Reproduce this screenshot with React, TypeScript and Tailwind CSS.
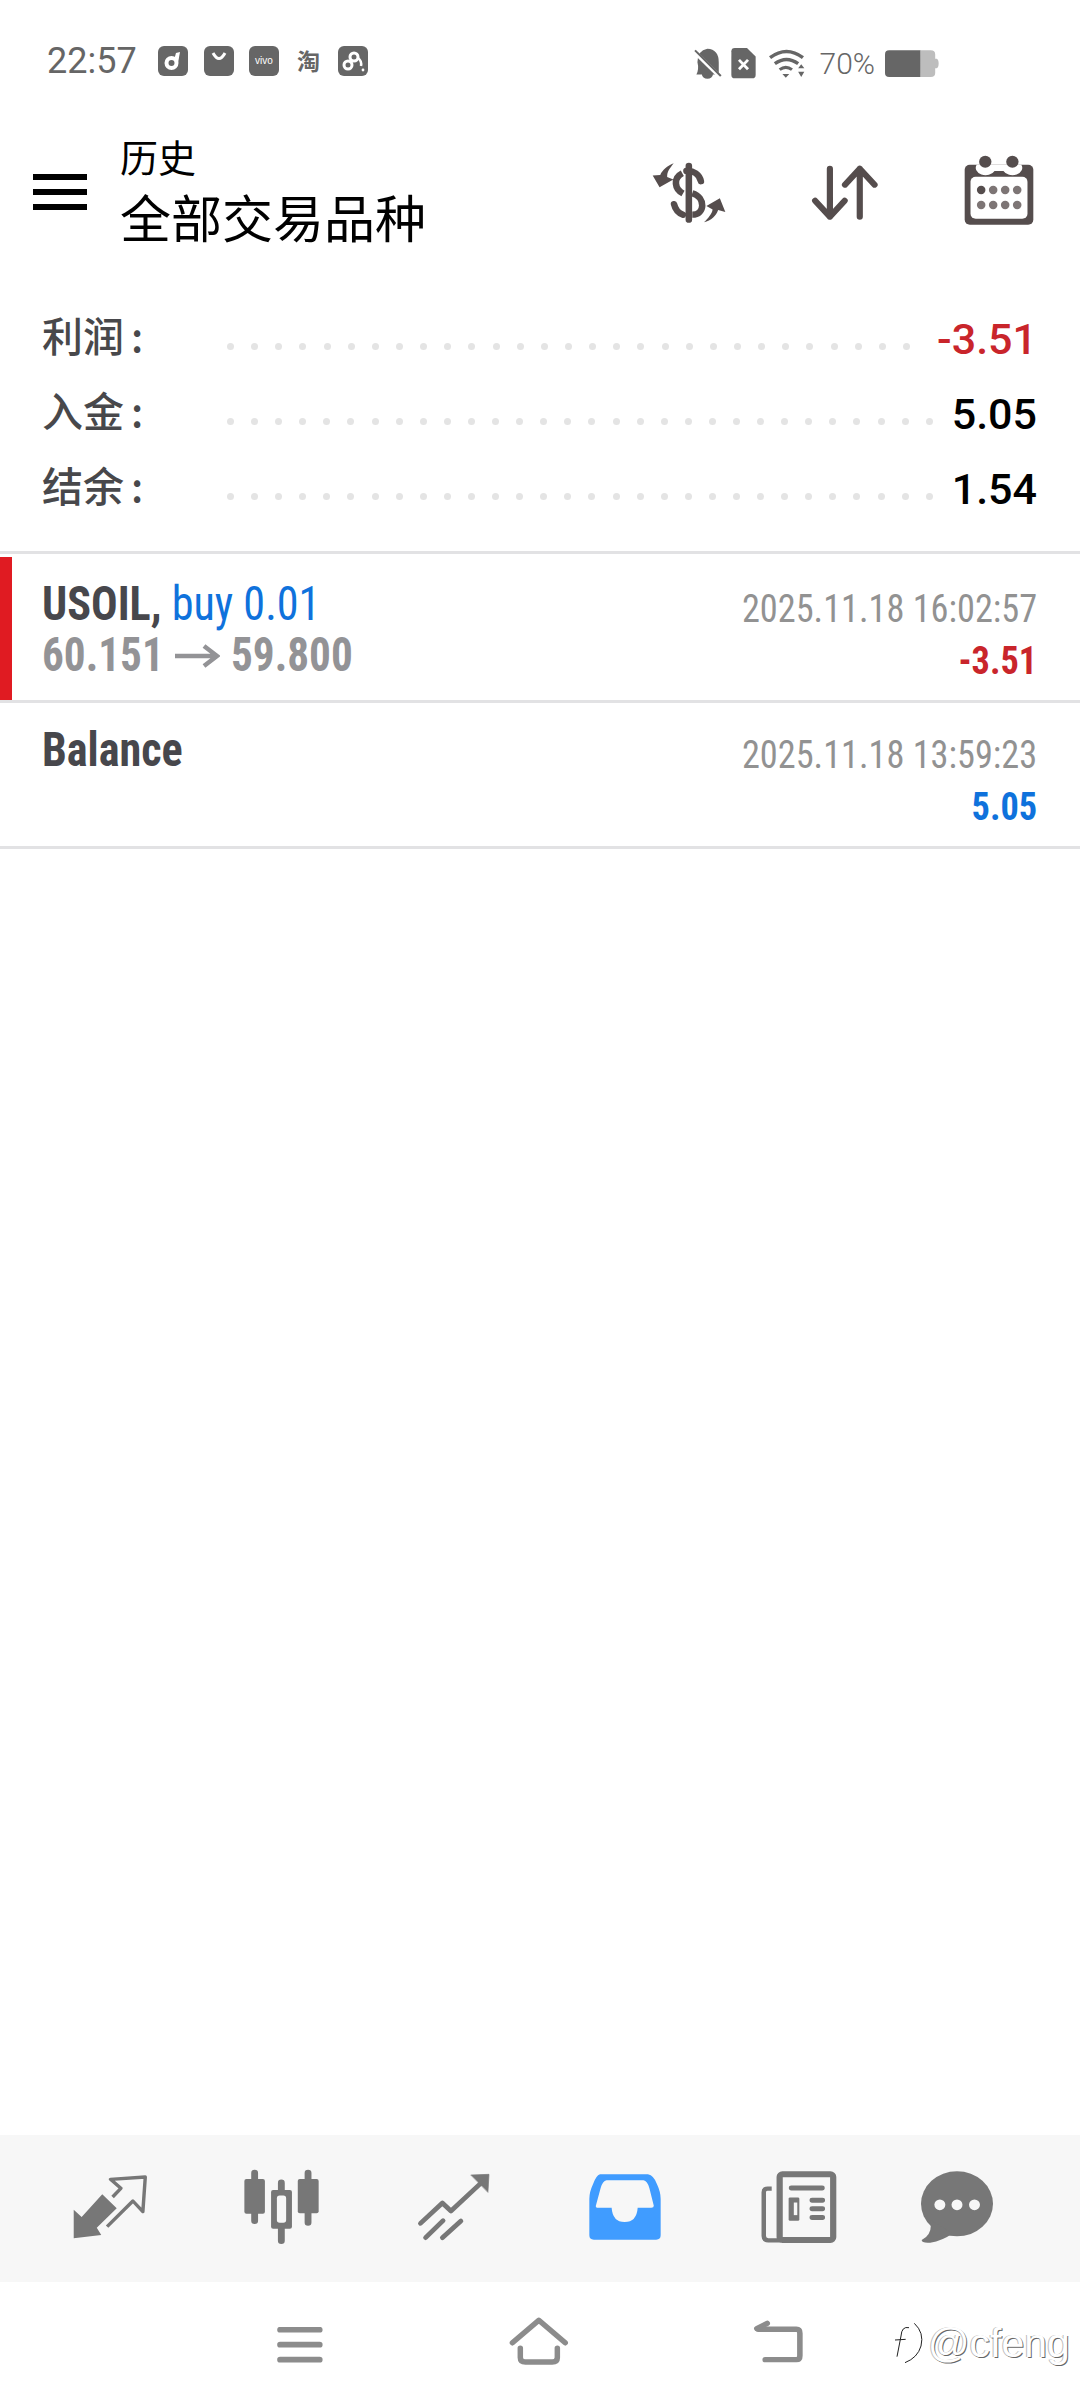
const BADGE = "flex h-[30px] w-[30px] items-center justify-center rounded-[6px] bg-[#666666]";

function Badge({ children }: { children: React.ReactNode }) {
  return <div className={BADGE}>{children}</div>;
}

function LeftStatus() {
  return (
    <div className="flex items-center">
      <span className="mt-[1px] w-[111px] font-['Roboto'] text-[36px] leading-none text-[#666666]">22:57</span>
      <Badge>
        <svg width="22" height="22" viewBox="0 0 22 22">
          <circle cx="9.5" cy="13" r="5" fill="none" stroke="#fff" strokeWidth="4" />
          <path d="M12 10 L14 3 L18 2 L16 13 Z" fill="#fff" />
        </svg>
      </Badge>
      <div className="ml-[16px]">
        <Badge>
          <svg width="22" height="22" viewBox="0 0 22 22">
            <path d="M5 3 Q11 14 17 3" fill="none" stroke="#fff" strokeWidth="3" />
          </svg>
        </Badge>
      </div>
      <div className="ml-[15px]">
        <Badge>
          <span className="font-['Liberation_Sans'] text-[10px] leading-none text-white">vivo</span>
        </Badge>
      </div>
      <span className="ml-[18px] w-[24px] font-['Noto_Sans_CJK_SC',sans-serif] text-[23px] font-bold leading-none text-[#666666]">淘</span>
      <div className="ml-[17px]">
        <Badge>
          <svg width="26" height="26" viewBox="0 0 26 26">
            <circle cx="8" cy="17" r="4" fill="none" stroke="#fff" strokeWidth="3" />
            <circle cx="14" cy="9" r="4" fill="none" stroke="#fff" strokeWidth="3" />
            <path d="M18 10 Q22 13 21 18" fill="none" stroke="#fff" strokeWidth="2.5" />
            <circle cx="23" cy="22" r="1.4" fill="#fff" />
          </svg>
        </Badge>
      </div>
    </div>
  );
}

function RightStatus() {
  return (
    <div className="flex items-center">
      <svg width="27.5" height="31" viewBox="455 143 80 92" preserveAspectRatio="none">
        <path d="M494 145 Q527 147 527 185 L527 222 L462 222 Q470 205 465 185 Q465 150 494 145 Z M478 222 A16 12 0 0 0 510 222 Z" fill="#666" />
        <path d="M450 148 L530 228" stroke="#fff" strokeWidth="12" />
        <path d="M458 150 L533 226" stroke="#666" strokeWidth="6" />
      </svg>
      <svg className="ml-[9px]" width="25" height="31" viewBox="559 143 72 92" preserveAspectRatio="none">
        <path d="M570 143 H605 L630 168 V223 Q630 233 620 233 H570 Q560 233 560 223 V153 Q560 143 570 143 Z" fill="#666" />
        <path d="M582 178 L608 206 M608 178 L582 206" stroke="#fff" strokeWidth="8" />
      </svg>
      <svg className="ml-[12px]" width="37" height="30" viewBox="664 146 108 90" preserveAspectRatio="none">
        <path d="M670 172 Q718 135 766 172" fill="none" stroke="#666" strokeWidth="10" />
        <path d="M684 190 Q718 165 752 190" fill="none" stroke="#666" strokeWidth="10" />
        <path d="M698 208 Q716 194 734 208" fill="none" stroke="#666" strokeWidth="9" />
        <path d="M706 221 H726 L716 232 Z M752 204 L761 192 L770 204 Z M752 214 H770 L761 230 Z" fill="#666" />
      </svg>
      <span className="ml-[15px] font-['Roboto'] text-[30px] font-light leading-none text-[#666666]">70%</span>
      <svg className="ml-[10px]" width="54" height="28" viewBox="1003 152 156 84" preserveAspectRatio="none">
        <path d="M1015 153 H1106 V233 H1015 Q1003 233 1003 221 V165 Q1003 153 1015 153 Z" fill="#666" />
        <path d="M1106 153 H1135 Q1148 153 1148 165 V178 H1152 Q1158 180 1158 192 Q1158 205 1152 207 H1148 V221 Q1148 233 1135 233 H1106 Z" fill="#bdbdbd" />
      </svg>
    </div>
  );
}

function DollarIcon() {
  return (
    <svg width="73.7" height="63" viewBox="328 480 214 190" fill="none" stroke="#554d4d" preserveAspectRatio="none">
      <path d="M435 495 V657" strokeWidth="19" strokeLinecap="round" />
      <path d="M470 541 C466 520 448 508 428 510" strokeWidth="19" strokeLinecap="round" />
      <path d="M416 517 C388 532 394 565 418 578" strokeWidth="19" />
      <path d="M445 577 C485 590 482 642 445 642" strokeWidth="19" />
      <path d="M392 610 C396 628 404 637 418 642" strokeWidth="19" strokeLinecap="round" />
      <path d="M391 487 C378 505 372 512 372 528 L390 536 L350 559 L330 524 L352 522 C358 508 372 494 391 487 Z" fill="#554d4d" stroke="none" />
      <path d="M479 665 C492 650 502 640 504 626 L486 616 L525 592 L541 634 L520 628 C514 646 500 660 479 665 Z" fill="#554d4d" stroke="none" />
    </svg>
  );
}

function SortIcon() {
  return (
    <svg width="68" height="58" viewBox="790 490 198 174" fill="none" stroke="#554d4d" strokeWidth="18" strokeLinecap="round" strokeLinejoin="round" preserveAspectRatio="none">
      <path d="M845 504 V648 M802 600 L845 648 L888 600" />
      <path d="M932 648 V504 M889 552 L932 504 L975 552" />
    </svg>
  );
}

function CalendarIcon() {
  return (
    <svg width="70" height="70" viewBox="1235 466 204 210" preserveAspectRatio="none">
      <rect x="1237" y="495" width="200" height="180" rx="15" fill="#554d4d" />
      <rect x="1254" y="531" width="166" height="126" rx="15" fill="#fff" />
      <path d="M1272 495 A26 20 0 0 0 1324 514 L1350 514 A26 20 0 0 0 1402 495 Z" fill="#fff" />
      <circle cx="1297" cy="486" r="18" fill="#554d4d" />
      <circle cx="1376" cy="486" r="18" fill="#554d4d" />
      <circle cx="1285" cy="571" r="12.5" fill="#554d4d" />
      {[1320, 1355, 1390].map((x) => (
        <circle key={x} cx={x} cy="571" r="12.5" fill="#7d7575" />
      ))}
      {[1285, 1320, 1355, 1390].map((x) => (
        <circle key={x} cx={x} cy="616" r="12.5" fill="#7d7575" />
      ))}
    </svg>
  );
}

function AppHeader() {
  return (
    <div className="flex h-[118px] items-center">
      <div className="ml-[33px] flex w-[54px] flex-col gap-[9px]">
        <div className="h-[6px] bg-black" />
        <div className="h-[6px] bg-black" />
        <div className="h-[6px] bg-black" />
      </div>
      <div className="ml-[33px] mt-[1px] flex flex-col font-['Noto_Sans_CJK_SC',sans-serif] text-black">
        <span className="text-[38px] leading-[46px]">历史</span>
        <span className="text-[51px] leading-[74px]">全部交易品种</span>
      </div>
      <div className="ml-auto mr-[46px] flex items-center">
        <DollarIcon />
        <div className="ml-[85px] mt-[2px]">
          <SortIcon />
        </div>
        <div className="ml-[85px] -mt-[4px]">
          <CalendarIcon />
        </div>
      </div>
    </div>
  );
}

function Dots({ width }: { width: number }) {
  const count = Math.floor(width / 23.9) + 1;
  return (
    <div className="flex translate-y-[12px] justify-between" style={{ width }}>
      {Array.from({ length: count }).map((_, i) => (
        <div key={i} className="h-[7px] w-[7px] rounded-full bg-[#e4e4e4]" />
      ))}
    </div>
  );
}

function SummaryRow({ label, value, dotWidth, color }: { label: string; value: string; dotWidth: number; color: string }) {
  return (
    <div className="flex h-[75px] items-center pl-[42px] pr-[43px]">
      <span className="w-[185px] shrink-0 font-['Noto_Sans_CJK_SC',sans-serif] text-[41px] font-medium leading-none text-[#48484b]">
        {label}
        <span className="ml-[7px]">:</span>
      </span>
      <Dots width={dotWidth} />
      <span className={`ml-auto translate-y-[5px] font-['Roboto'] text-[43px] font-medium leading-none ${color}`}>{value}</span>
    </div>
  );
}

function ArrowGlyph() {
  return (
    <svg className="mt-[15px]" width="45" height="24" viewBox="0 0 45 24" fill="none" stroke="#939396" strokeWidth="4.5">
      <path d="M0 12 H42 M29 2 L42 12 L29 22" />
    </svg>
  );
}

function DealRow({ title, date, amount, amountColor, accent, children }: { title: React.ReactNode; date: string; amount: string; amountColor: string; accent?: boolean; children?: React.ReactNode }) {
  return (
    <div className="flex h-[146px] border-b-[3px] border-[#e2e2e4]">
      <div className={`w-[12px] shrink-0 ${accent ? "bg-[#e01b22]" : ""}`} />
      <div className="flex flex-1 justify-between pl-[30px] pr-[43px] pt-[21px] font-['Roboto'] font-stretch-condensed">
        <div className="w-[400px] text-[48px] font-bold leading-[51px]">
          <div className="origin-left scale-x-[.92] whitespace-nowrap text-[#47474c]">{title}</div>
          {children}
        </div>
        <div className="origin-right scale-x-[.955] pt-[5px] text-right leading-[52px]">
          <div className="text-[38px] font-normal text-[#929292]">{date}</div>
          <div className={`text-[38px] font-bold ${amountColor}`}>{amount}</div>
        </div>
      </div>
    </div>
  );
}

function TradeIcon() {
  return (
    <svg width="75" height="66" viewBox="210 165 218 198" fill="none" preserveAspectRatio="none">
      <path d="M215 358 V272 L238 294 L298 226 L340 268 L282 326 L295 348 Z" fill="#777" />
      <path d="M328 234 L352 208 L322 181 L423 174 L416 278 L387 246 L312 323" stroke="#777" strokeWidth="10" strokeLinejoin="round" />
    </svg>
  );
}

function CandleIcon() {
  return (
    <svg width="76" height="75" viewBox="705 150 222 226" preserveAspectRatio="none">
      <path d="M739 162 V306 M817 192 V366 M895 162 V311" stroke="#777" strokeWidth="20" strokeLinecap="round" />
      <rect x="709" y="180" width="60" height="105" rx="6" fill="#777" />
      <rect x="787" y="213" width="61" height="117" rx="6" fill="#777" />
      <rect x="804" y="230" width="27" height="82" rx="8" fill="#f7f7f7" />
      <rect x="865" y="180" width="61" height="103" rx="6" fill="#777" />
    </svg>
  );
}

function ChartIcon() {
  return (
    <svg width="74" height="68" viewBox="1208 158 216 204" fill="none" stroke="#777" strokeWidth="14" strokeLinecap="round" strokeLinejoin="round" preserveAspectRatio="none">
      <path d="M1221 309 L1285 248 L1310 272 L1403 183" />
      <path d="M1236 352 L1287 301 M1285 352 L1339 302" />
      <path d="M1369 164 L1421 162 L1418 215 Z" fill="#777" strokeWidth="2" />
    </svg>
  );
}

function InboxIcon() {
  return (
    <svg width="72" height="66" viewBox="146 161 210 198" preserveAspectRatio="none">
      <path d="M178 162 H318 Q335 165 345 193 Q355 215 355 235 V345 Q355 358 342 358 H160 Q147 358 147 345 V235 Q147 215 157 193 Q167 165 178 162 Z" fill="#409cff" />
      <path d="M197 180 H305 Q316 182 322 203 L335 256 Q335 262 328 262 H288 Q285 305 250 305 Q215 305 212 262 H172 Q165 262 166 256 L180 203 Q186 182 197 180 Z" fill="#f7f7f7" />
    </svg>
  );
}

function NewsIcon() {
  return (
    <svg width="76" height="72" viewBox="645 152 220 217" fill="none" preserveAspectRatio="none">
      <rect x="699" y="162" width="155" height="198" rx="8" fill="#f7f7f7" stroke="#777" strokeWidth="18" />
      <path d="M676 205 H664 Q653 205 653 216 V348 Q653 361 666 361 H702" stroke="#777" strokeWidth="13" />
      <path d="M733 203 H822 M793 240 H823 M793 266 H823 M793 292 H823" stroke="#777" strokeWidth="15" strokeLinecap="round" />
      <rect x="725" y="232" width="31" height="70" rx="4" fill="#777" />
      <rect x="740" y="247" width="10" height="38" fill="#f7f7f7" />
    </svg>
  );
}

function ChatIcon() {
  return (
    <svg width="72" height="72" viewBox="1108 152 210 217" preserveAspectRatio="none">
      <ellipse cx="1213" cy="251" rx="105" ry="98" fill="#777" />
      <path d="M1136 300 Q1142 345 1110 360 Q1110 370 1135 368 Q1170 362 1200 340 Z" fill="#777" />
      <circle cx="1163" cy="254" r="16" fill="#f7f7f7" />
      <circle cx="1213" cy="254" r="16" fill="#f7f7f7" />
      <circle cx="1264" cy="254" r="16" fill="#f7f7f7" />
    </svg>
  );
}

function TabBar() {
  return (
    <div className="flex h-[147px] items-center bg-[#f7f7f7] pb-[4px] pl-[72px]">
      <TradeIcon />
      <div className="ml-[96px]"><CandleIcon /></div>
      <div className="ml-[97px]"><ChartIcon /></div>
      <div className="ml-[99px]"><InboxIcon /></div>
      <div className="ml-[100px]"><NewsIcon /></div>
      <div className="ml-[84px]"><ChatIcon /></div>
    </div>
  );
}

function NavBar() {
  return (
    <div className="relative flex h-[126px] items-start pl-[277px] pt-[45px]">
      <svg width="47.5" height="36" viewBox="804 622 138 108" fill="none" stroke="#8c8c8c" strokeWidth="17" strokeLinecap="round" preserveAspectRatio="none">
        <path d="M813 630 H928 M813 675 H928 M813 720 H928" />
      </svg>
      <svg className="-mt-[10px] ml-[184px]" width="60" height="48" viewBox="1482 590 175 145" fill="none" stroke="#8c8c8c" strokeWidth="16" strokeLinecap="round" strokeLinejoin="round" preserveAspectRatio="none">
        <path d="M1492 668 L1569 600 L1646 668" />
        <path d="M1515 684 V712 Q1515 726 1530 726 H1608 Q1623 726 1623 712 V684" />
      </svg>
      <svg className="-mt-[7px] ml-[184px]" width="50" height="43" viewBox="625 600 144 130" fill="none" stroke="#8c8c8c" strokeWidth="16" strokeLinecap="round" strokeLinejoin="round" preserveAspectRatio="none">
        <path d="M640 628 H750 Q760 628 760 640 V708 Q760 720 750 720 H660" />
        <path d="M666 610 L636 626" />
      </svg>
      <div className="absolute left-[893px] top-[40px] flex items-center">
        <svg width="32" height="42" viewBox="1034 628 96 126" fill="none" stroke="#222" strokeWidth="3">
          <path d="M1082 645 Q1060 640 1058 670 L1046 732" />
          <path d="M1040 682 L1072 680" />
          <path d="M1098 632 Q1128 660 1118 700 Q1108 735 1070 750" />
        </svg>
        <span className="ml-[3px] font-['Liberation_Sans'] text-[41px] font-light leading-none text-white [text-shadow:1px_1px_0_#666,-1px_0_0_#bbb]">@cfeng</span>
      </div>
    </div>
  );
}

export default function App() {
  return (
    <div className="flex h-[2408px] w-[1080px] flex-col overflow-hidden bg-white">
      <div className="flex h-[82px] items-end justify-between pb-[3px] pl-[47px] pr-[141px]">
        <LeftStatus />
        <RightStatus />
      </div>
      <div className="mt-[51px]">
        <AppHeader />
      </div>
      <div className="mt-[46px]">
        <SummaryRow label="利润" value="-3.51" dotWidth={683} color="text-[#c9252b]" />
        <SummaryRow label="入金" value="5.05" dotWidth={706} color="text-black" />
        <SummaryRow label="结余" value="1.54" dotWidth={706} color="text-black" />
      </div>
      <div className="mt-[29px] h-[3px] bg-[#e2e2e4]" />
      <div className="h-[3px]" />
      <DealRow
        accent
        title={<>USOIL, <span className="font-normal text-[#0f72dc]">buy 0.01</span></>}
        date="2025.11.18 16:02:57"
        amount="-3.51"
        amountColor="text-[#c9252b]"
      >
        <div className="flex text-[#939396]">
          <span className="w-[133px] origin-left scale-x-[.9]">60.151</span>
          <ArrowGlyph />
          <span className="ml-[11px] origin-left scale-x-[.9]">59.800</span>
        </div>
      </DealRow>
      <DealRow title="Balance" date="2025.11.18 13:59:23" amount="5.05" amountColor="text-[#0f72dc]" />
      <div className="flex-1" />
      <TabBar />
      <NavBar />
    </div>
  );
}
